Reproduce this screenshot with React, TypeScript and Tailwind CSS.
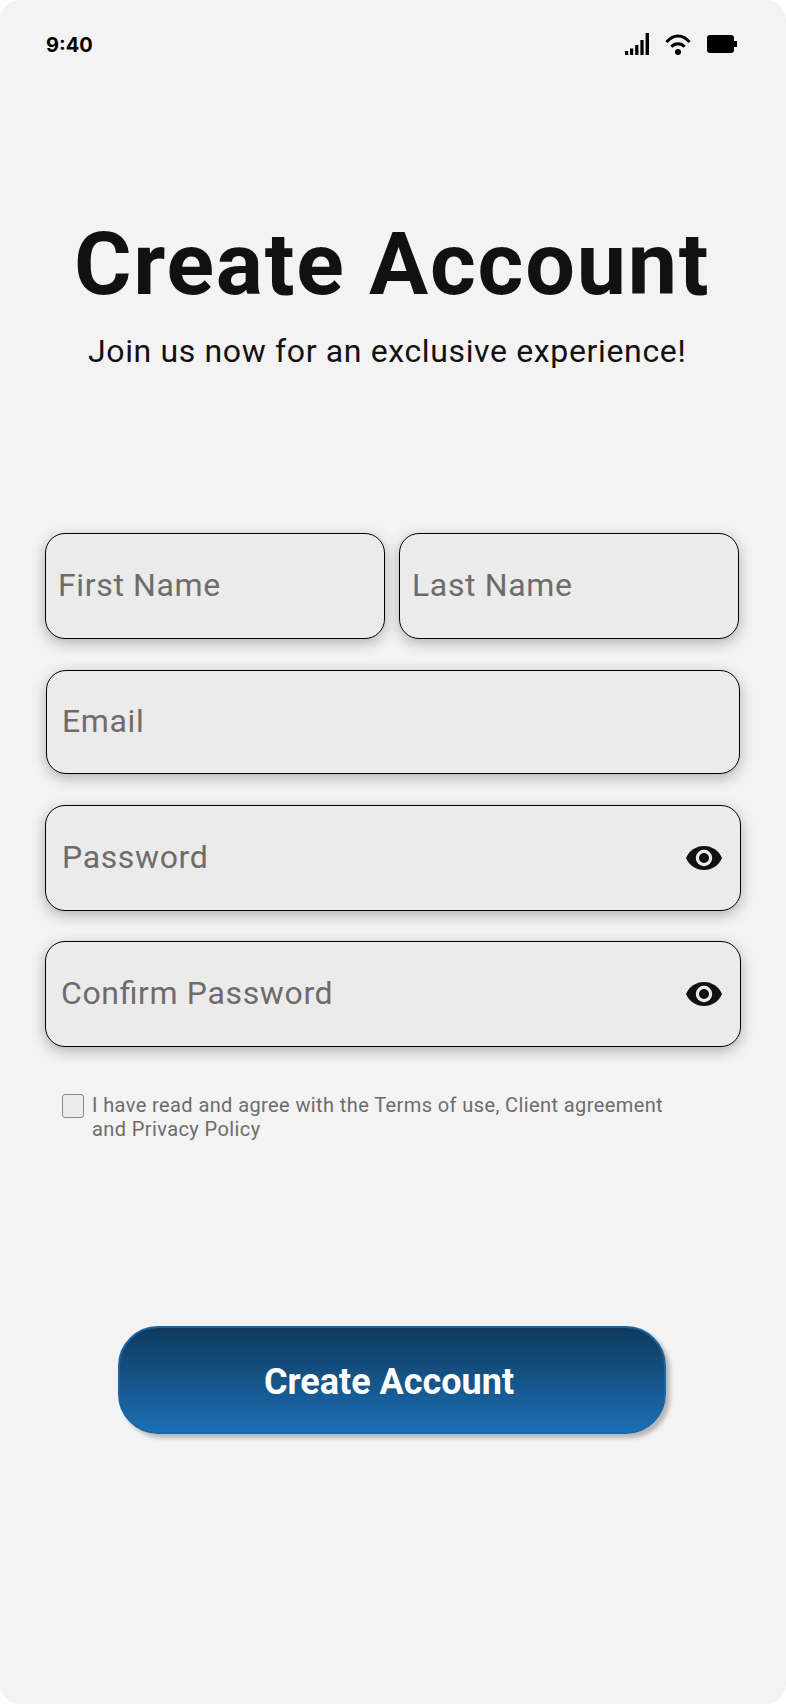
import type { ReactNode } from "react";

function StatusBar() {
  return (
    <div className="flex h-[88px] items-center justify-between pl-[46px] pr-[49px]">
      <span className="pt-[2px] font-['Inter',sans-serif] text-[20px] font-bold leading-6 text-black">9:40</span>
      <div className="flex h-6 items-center">
        <svg width="24" height="22" viewBox="0 0 24 22" fill="#000">
          <rect x="0" y="18" width="3.2" height="4" />
          <rect x="5" y="15.5" width="3.2" height="6.5" />
          <rect x="10.2" y="12" width="3.2" height="10" />
          <rect x="15.4" y="7" width="3.2" height="15" />
          <rect x="20.6" y="0" width="3.4" height="22" />
        </svg>
        <svg className="ml-4" width="26" height="22" viewBox="0 0 26 22" fill="none" stroke="#000" strokeWidth="3">
          <path d="M1.500 9.100C4.600 5.100 8.400 2.900 13 2.900s8.400 2.200 11.500 6.200" />
          <path d="M6.300 13.800C8.200 11.800 10.400 10.800 13 10.800s4.800 1 6.700 3" />
          <circle cx="13" cy="18.900" r="3" fill="#000" stroke="none" />
        </svg>
        <svg className="ml-4" width="30" height="18" viewBox="0 0 30 18" fill="#000">
          <rect width="27" height="18" rx="3" />
          <rect x="26" y="6" width="4" height="6" />
        </svg>
      </div>
    </div>
  );
}

function EyeIcon() {
  return (
    <svg width="36" height="24" viewBox="0 0 36 24">
      <path d="M0 12C3 4.800 9.900 0 18 0s15 4.800 18 12c-3 7.200-9.900 12-18 12S3 19.200 0 12Z" fill="#111" />
      <circle cx="18" cy="12" r="6.600" fill="#111" stroke="#ebebeb" strokeWidth="3.200" />
    </svg>
  );
}

function Field({ className, children, icon }: { className: string; children: ReactNode; icon?: boolean }) {
  return (
    <div
      className={
        "flex items-center justify-between rounded-[20px] border border-black bg-[#ebebeb] pr-[18px] text-[32px] leading-10 tracking-[0.64px] text-[#6f6b6b] shadow-[0_4px_14px_rgba(0,0,0,0.27)] " +
        className
      }
    >
      <span className="pb-[2px] [font-feature-settings:'liga'_1]">{children}</span>
      {icon && <EyeIcon />}
    </div>
  );
}

export default function App() {
  return (
    <div className="h-[1704px] w-[786px] bg-white">
      <main className="flex h-full flex-col rounded-[20px] bg-[#f3f3f3] font-['Roboto',sans-serif]">
        <StatusBar />
        <h1 className="mt-[132px] whitespace-nowrap pl-[74px] text-[88px] font-bold leading-[88px] tracking-[1.76px] text-[#111]">
          Create Account
        </h1>
        <p className="mt-[23px] whitespace-nowrap pl-[88px] text-[32px] leading-10 tracking-[0.64px] text-[#111]">
          Join us now for an exclusive experience!
        </p>

        <form className="mt-[162px] flex flex-col pl-[45px]">
          <div className="flex gap-[14px]">
            <Field className="h-[106px] w-[340px] pl-3">First Name</Field>
            <Field className="h-[106px] w-[340px] pl-3">Last Name</Field>
          </div>
          <Field className="ml-px mt-[31px] h-[104px] w-[694px] pl-[15px]">Email</Field>
          <Field className="mt-[31px] h-[106px] w-[696px] pl-4" icon>
            Password
          </Field>
          <Field className="mt-[30px] h-[106px] w-[696px] pl-[15px]" icon>
            Confirm Password
          </Field>
          <div className="mt-[46px] flex pl-[17px]">
            <span className="mt-px h-6 w-[22px] rounded-[3px] border border-[#8a8787] bg-[#ebebeb]" />
            <span className="ml-2 w-[600px] text-[20px] leading-6 tracking-[0.4px] text-[#6f6b6b]">
              I have read and agree with the Terms of use, Client agreement
              <br />
              and Privacy Policy
            </span>
          </div>
        </form>

        <button
          type="button"
          className="ml-[118px] mt-[185px] h-[108px] w-[548px] rounded-[40px] border-2 border-[#1966a6] bg-linear-to-b from-[#0f3a5d] to-[#1b6fb5] pr-[6px] pt-[3px] text-[36px] font-bold leading-10 text-white shadow-[4px_4px_4px_rgba(0,0,0,0.25)]"
        >
          Create Account
        </button>
      </main>
    </div>
  );
}
